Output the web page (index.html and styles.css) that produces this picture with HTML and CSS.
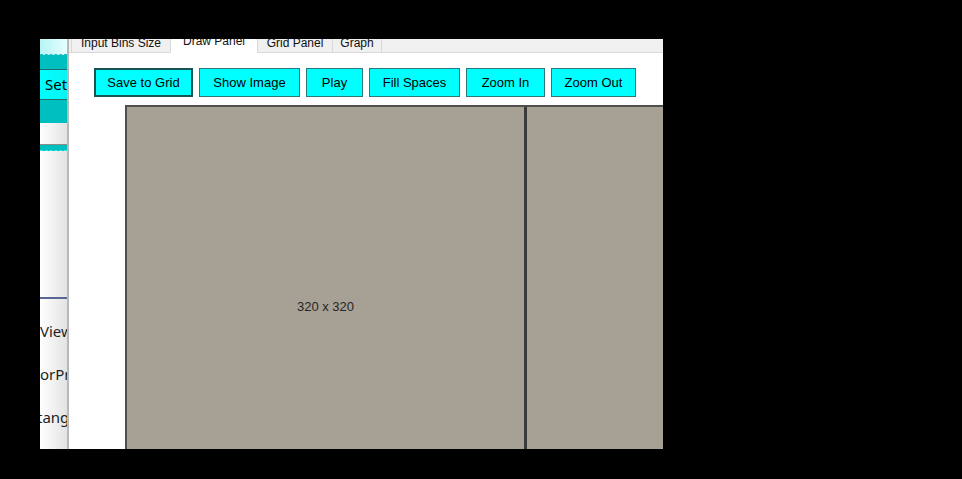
FILE: index.html
```html
<!DOCTYPE html>
<html lang="en">
<head>
    <meta charset="UTF-8">
    <meta name="viewport" content="width=device-width, initial-scale=1.0">
    <title>Draw Panel</title>
    <link rel="stylesheet" href="styles.css">
</head>
<body>

<div class="screen">
    <aside class="side">
        <div class="side-head"></div>
        <div class="side-teal"></div>
        <div class="side-set">Set</div>
        <div class="side-teal2"></div>
        <div class="side-white"></div>
        <div class="side-teal3"></div>
        <div class="side-blank"></div>
        <ul class="side-list">
            <li>View</li>
            <li>orPro</li>
            <li class="cut">tangle</li>
        </ul>
    </aside>

    <main class="window">
        <div class="tabs">
            <div class="tab tab-bins">Input Bins Size</div>
            <div class="tab tab-draw active">Draw Panel</div>
            <div class="tab tab-grid">Grid Panel</div>
            <div class="tab tab-graph">Graph</div>
        </div>
        <div class="panel">
            <div class="toolbar">
                <button class="btn btn-save default">Save to Grid</button>
                <button class="btn btn-show">Show Image</button>
                <button class="btn btn-play">Play</button>
                <button class="btn btn-fill">Fill Spaces</button>
                <button class="btn btn-zin">Zoom In</button>
                <button class="btn btn-zout">Zoom Out</button>
            </div>
            <div class="canvas">
                <div class="cell">320 x 320</div>
                <div class="cell"></div>
            </div>
        </div>
    </main>
</div>

</body>
</html>
```

FILE: styles.css
```css
*{
    margin: 0;
    padding: 0;
    box-sizing: border-box;
}

body{
    background: #000;
    height: 479px;
    overflow: hidden;
    font-family: 'Liberation Sans', Arial, sans-serif;
}

.screen{
    margin: 39px 0 0 40px;
    width: 623px;
    height: 410px;
    display: flex;
    overflow: hidden;
}

/* app behind the window */
.side{
    width: 27px;
    flex-shrink: 0;
    display: flex;
    flex-direction: column;
    background: linear-gradient(to right, #ffffff, #e3e3e3);
    overflow: hidden;
}
.side-head{
    height: 16px;
    background: linear-gradient(to right, #b6f4f4, #e6ffff);
    border-bottom: 1px dashed #22c4c4;
}
.side-teal{
    height: 15px;
    background: #00bfbf;
    border-bottom: 1px solid #1f6a6a;
}
.side-set{
    height: 30px;
    background: linear-gradient(to right, #00ffff, #0af4f4);
    border-bottom: 1px solid #2a6868;
    font-family: 'Noto Sans', sans-serif;
    font-size: 15px;
    line-height: 29px;
    padding-left: 5px;
    color: #000;
    white-space: nowrap;
}
.side-teal2{
    height: 23px;
    background: #00bfbf;
}
.side-white{
    height: 22px;
    border-bottom: 1px solid #8a8a8a;
}
.side-teal3{
    height: 6px;
    background: #00bfbf;
    border-bottom: 1px dashed #3ee6e6;
}
.side-blank{
    height: 148px;
    border-bottom: 2px solid #5a6796;
}
.side-list{
    list-style: none;
    padding-top: 11px;
    font-family: 'Noto Sans', sans-serif;
    font-size: 15px;
    color: #1e1e1e;
}
.side-list li{
    line-height: 43px;
    white-space: nowrap;
}
.side-list li.cut{
    text-indent: -3px;
}

/* window */
.window{
    flex: 1;
    display: flex;
    flex-direction: column;
    background: #f0f0f0;
    border-left: 2px solid #b9b9b9;
    overflow: hidden;
}

.tabs{
    display: flex;
    align-items: flex-end;
    height: 19px;
    margin-top: -6px;
    padding-left: 2px;
    flex-shrink: 0;
}
.tab{
    height: 17px;
    background: #f0f0f0;
    border: 1px solid #d9d9d9;
    border-bottom: none;
    font-size: 12px;
    line-height: 15px;
    color: #111;
    text-align: center;
    white-space: nowrap;
}
.tab + .tab{
    margin-left: -1px;
}
.tab.active{
    height: 20px;
    background: #fff;
    margin-bottom: -1px;
    position: relative;
    z-index: 1;
}
.tab-bins{ width: 100px; }
.tab-draw{ width: 88px; }
.tab-grid{ width: 76px; }
.tab-graph{ width: 50px; }

.panel{
    flex: 1;
    background: #fff;
    border-top: 1px solid #d9d9d9;
    padding: 15px 0 0 25px;
    overflow: hidden;
}

.toolbar{
    display: flex;
    gap: 6px;
}
.btn{
    height: 29px;
    background: #00ffff;
    border: 1px solid #2d7878;
    font-family: 'Liberation Sans', Arial, sans-serif;
    font-size: 13px;
    color: #000;
    white-space: nowrap;
    flex-shrink: 0;
}
.btn.default{
    border: 2px solid #195454;
}
.btn-save{ width: 99px; }
.btn-show{ width: 101px; }
.btn-play{ width: 57px; }
.btn-fill{ width: 91px; }
.btn-zin{ width: 79px; }
.btn-zout{ width: 85px; }

.canvas{
    display: flex;
    margin: 8px 0 0 31px;
    background: #a7a094;
    border-top: 2px solid #4f4f4f;
    border-left: 2px solid #4f4f4f;
    width: max-content;
}
.cell{
    width: 400px;
    height: 398px;
    flex-shrink: 0;
    border-right: 3px solid #3a3a3a;
    display: flex;
    align-items: center;
    justify-content: center;
    font-size: 13px;
    color: #262626;
}
```
